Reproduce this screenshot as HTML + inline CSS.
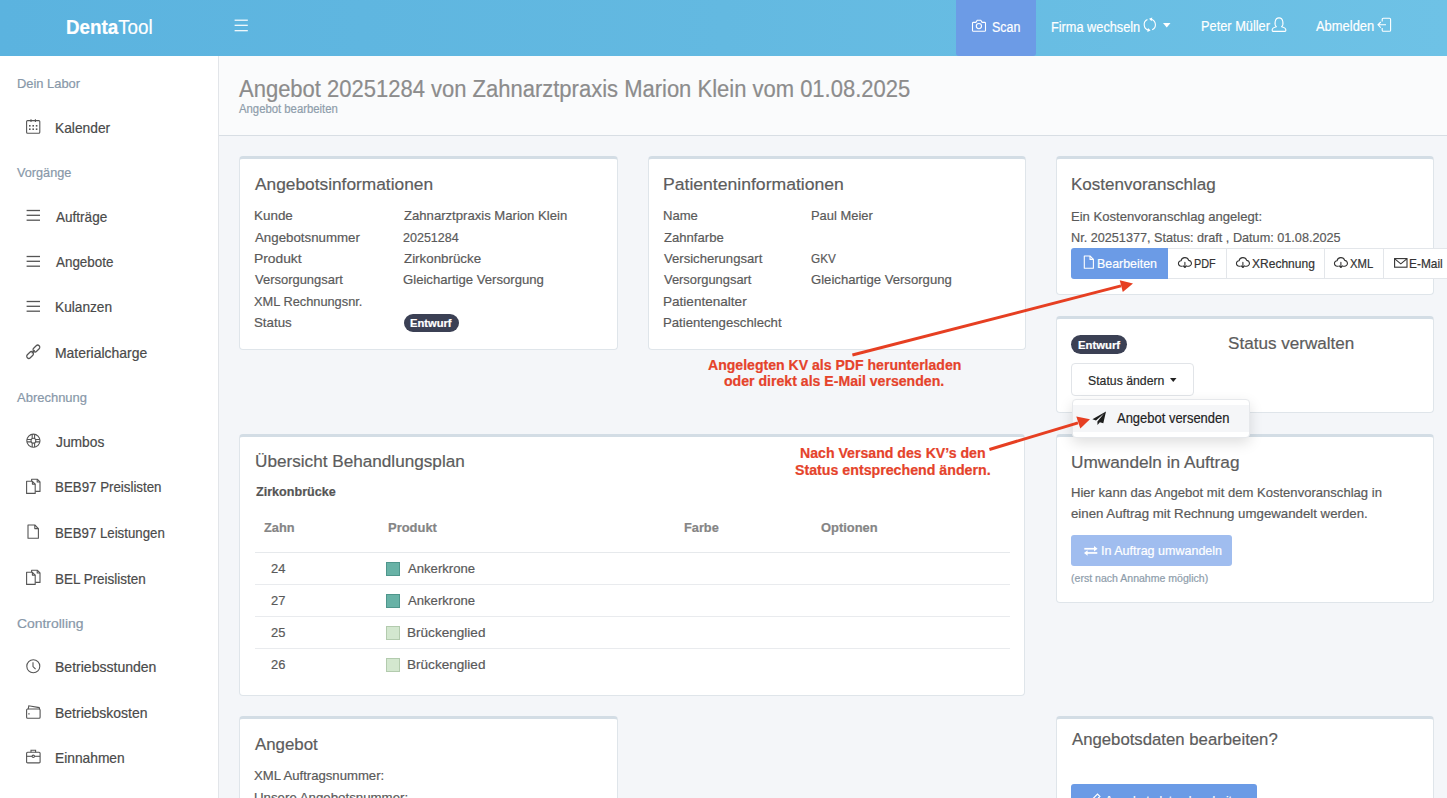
<!DOCTYPE html>
<html><head><meta charset="utf-8">
<style>
html,body{margin:0;padding:0}
body{width:1447px;height:798px;overflow:hidden;position:relative;background:#f4f6f9;font-family:"Liberation Sans",sans-serif}
.a{position:absolute;box-sizing:border-box}
.t{position:absolute;white-space:nowrap;line-height:1;transform-origin:0 0;font-family:"Liberation Sans",sans-serif}
.t b{font-weight:700}
.t{-webkit-text-stroke:0.2px currentColor}
.card{position:absolute;box-sizing:border-box;background:#fff;border:1px solid #dfe5ea;border-top:3px solid #d3dde5;border-radius:4px}
svg{position:absolute;overflow:visible}
</style></head><body>
<!-- header -->
<div class="a" style="left:0;top:0;width:1447px;height:56px;background:linear-gradient(90deg,#5bb3df 0%,#63b9e1 50%,#6ec2e6 100%)"></div>
<div class="a" style="left:956px;top:0;width:80px;height:56px;background:#6c9be6;border-radius:0 0 3px 3px"></div>
<!-- sidebar -->
<div class="a" style="left:0;top:56px;width:219px;height:742px;background:#fff;border-right:1px solid #e2e5e9"></div>
<!-- page header -->
<div class="a" style="left:219px;top:56px;width:1228px;height:80px;background:#fafbfc;border-bottom:1px solid #d8dee4"></div>

<!-- cards -->
<div class="card" style="left:239px;top:156px;width:379px;height:194px"></div>
<div class="card" style="left:648px;top:156px;width:378px;height:194px"></div>
<div class="card" style="left:1056px;top:156px;width:378px;height:139px"></div>
<div class="card" style="left:1056px;top:316px;width:378px;height:97px"></div>
<div class="card" style="left:239px;top:434px;width:786px;height:262px"></div>
<div class="card" style="left:1056px;top:434px;width:378px;height:169px"></div>
<div class="card" style="left:239px;top:716px;width:379px;height:120px"></div>
<div class="card" style="left:1056px;top:716px;width:378px;height:120px"></div>

<!-- card1 badge -->
<div class="a" style="left:404px;top:314px;width:55px;height:18px;background:#3b4054;border-radius:9px"></div>
<!-- card3 button group -->
<div class="a" style="left:1167px;top:248px;width:290px;height:31px;background:#fff;border:1px solid #e3e6ea;border-right:none"></div>
<div class="a" style="left:1226px;top:248px;width:1px;height:31px;background:#e3e6ea"></div>
<div class="a" style="left:1324px;top:248px;width:1px;height:31px;background:#e3e6ea"></div>
<div class="a" style="left:1383px;top:248px;width:1px;height:31px;background:#e3e6ea"></div>
<div class="a" style="left:1071px;top:248px;width:97px;height:31px;background:#6b9be6;border-radius:3px 0 0 3px"></div>
<!-- card4 -->
<div class="a" style="left:1071px;top:335px;width:56px;height:19px;background:#3b4054;border-radius:9.5px"></div>
<div class="a" style="left:1071px;top:363px;width:123px;height:33px;background:#fff;border:1px solid #e1e4e8;border-radius:4px"></div>
<!-- dropdown -->
<div class="a" style="left:1072px;top:399px;width:178px;height:39px;background:#fff;border:1px solid #e6e8eb;border-radius:4px;box-shadow:0 5px 14px rgba(0,0,0,.13)"></div>
<div class="a" style="left:1073px;top:405px;width:176px;height:27px;background:#f5f6f8"></div>
<!-- card5 table lines -->
<div class="a" style="left:255px;top:552px;width:755px;height:1px;background:#e6e9ec"></div>
<div class="a" style="left:255px;top:584px;width:755px;height:1px;background:#e9ebee"></div>
<div class="a" style="left:255px;top:616px;width:755px;height:1px;background:#e9ebee"></div>
<div class="a" style="left:255px;top:648px;width:755px;height:1px;background:#e9ebee"></div>
<!-- swatches -->
<div class="a" style="left:386px;top:562px;width:14px;height:14px;background:#68b2a6;border:1px solid #4f968c"></div>
<div class="a" style="left:386px;top:594px;width:14px;height:14px;background:#68b2a6;border:1px solid #4f968c"></div>
<div class="a" style="left:386px;top:626px;width:14px;height:14px;background:#d3e7cf;border:1px solid #b3cbae"></div>
<div class="a" style="left:386px;top:658px;width:14px;height:14px;background:#d3e7cf;border:1px solid #b3cbae"></div>
<!-- card6 button -->
<div class="a" style="left:1071px;top:535px;width:161px;height:31px;background:#a0bdef;border-radius:3px"></div>
<!-- card8 button -->
<div class="a" style="left:1071px;top:784px;width:186px;height:40px;background:#6b9be6;border-radius:3px"></div>

<!-- ICONS -->
<!-- header hamburger -->
<svg style="left:234px;top:18px" width="15" height="15" viewBox="0 0 15 15"><g stroke="#fff" stroke-width="1.2"><line x1="0.6" y1="2.2" x2="13.8" y2="2.2"/><line x1="0.6" y1="7.3" x2="13.8" y2="7.3"/><line x1="0.6" y1="12.7" x2="13.8" y2="12.7"/></g></svg>
<!-- camera -->
<svg style="left:972px;top:19px" width="15" height="14" viewBox="0 0 15 14"><g fill="none" stroke="#fff" stroke-width="1.1" stroke-linejoin="round"><path d="M1.4 3.4h2.5l1.3-2.2h3.6l1.3 2.2h2.5q.9 0 .9.9v7.1q0 .9-.9.9H1.4q-.9 0-.9-.9V4.3q0-.9.9-.9z"/><circle cx="6.9" cy="7.1" r="2.6"/></g></svg>
<!-- refresh -->
<svg style="left:1142px;top:17px" width="16" height="16" viewBox="0 0 16 16"><path d="M5.43 2.62A5.6 5.6 0 0 0 6.83 13.21 M10.17 12.78A5.6 5.6 0 0 0 8.77 2.19" fill="none" stroke="#fff" stroke-width="1.1"/><path d="M8.60 13.53L5.30 14.98L5.99 11.04Z M7.00 1.87L10.30 0.42L9.61 4.36Z" fill="#fff"/></svg>
<!-- caret -->
<svg style="left:1163px;top:23px" width="8" height="5" viewBox="0 0 8 5"><path d="M0 0h7.5L3.75 4.5z" fill="#fff"/></svg>
<!-- user -->
<svg style="left:1271px;top:17px" width="16" height="16" viewBox="0 0 16 16"><path d="M5.4 9.7C3.3 8.2 3.3 0.9 8 0.9S12.7 8.2 10.6 9.7C13.6 10.4 14.8 11.3 14.8 12.7V13.6Q14.8 14.4 14 14.4H2Q1.2 14.4 1.2 13.6V12.7C1.2 11.3 2.4 10.4 5.4 9.7Z" fill="none" stroke="#fff" stroke-width="1.1" stroke-linejoin="round"/></svg>
<!-- logout -->
<svg style="left:1377px;top:17px" width="15" height="15" viewBox="0 0 15 15"><g fill="none" stroke="#fff" stroke-width="1.1"><path d="M5.2 4.6V2.4Q5.2 1.3 6.3 1.3H12.5Q13.6 1.3 13.6 2.4V13.2Q13.6 14.3 12.5 14.3H6.3Q5.2 14.3 5.2 13.2V11"/><path d="M9 7.8H1M3.8 5 1 7.8l2.8 2.8"/></g></svg>

<!-- sidebar icons -->
<svg style="left:26px;top:119px" width="15" height="15" viewBox="0 0 15 15"><g fill="none" stroke="#555" stroke-width="1.1"><rect x="0.6" y="1.6" width="13.2" height="12.6" rx="1"/><line x1="5" y1="0.3" x2="5" y2="3"/><line x1="9.4" y1="0.3" x2="9.4" y2="3"/></g><g fill="#555"><rect x="3" y="6" width="1.6" height="1.6"/><rect x="6.4" y="6" width="1.6" height="1.6"/><rect x="9.8" y="6" width="1.6" height="1.6"/><rect x="3" y="9.4" width="1.6" height="1.6"/><rect x="6.4" y="9.4" width="1.6" height="1.6"/><rect x="9.8" y="9.4" width="1.6" height="1.6"/></g></svg>
<svg style="left:26px;top:209px" width="15" height="12" viewBox="0 0 15 12"><g stroke="#555" stroke-width="1.3"><line x1="0.6" y1="1.5" x2="14" y2="1.5"/><line x1="0.6" y1="6.3" x2="14" y2="6.3"/><line x1="0.6" y1="11.2" x2="14" y2="11.2"/></g></svg>
<svg style="left:26px;top:254.5px" width="15" height="12" viewBox="0 0 15 12"><g stroke="#555" stroke-width="1.3"><line x1="0.6" y1="1.5" x2="14" y2="1.5"/><line x1="0.6" y1="6.3" x2="14" y2="6.3"/><line x1="0.6" y1="11.2" x2="14" y2="11.2"/></g></svg>
<svg style="left:26px;top:300px" width="15" height="12" viewBox="0 0 15 12"><g stroke="#555" stroke-width="1.3"><line x1="0.6" y1="1.5" x2="14" y2="1.5"/><line x1="0.6" y1="6.3" x2="14" y2="6.3"/><line x1="0.6" y1="11.2" x2="14" y2="11.2"/></g></svg>
<!-- link -->
<svg style="left:22px;top:338px" width="24" height="24" viewBox="0 0 24 24"><g fill="none" stroke="#555" stroke-width="1.2"><rect x="-2.1" y="-3.9" width="4.2" height="7.8" rx="2.1" transform="translate(14.4 10.5) rotate(45)"/><rect x="-2.1" y="-3.9" width="4.2" height="7.8" rx="2.1" transform="translate(8.1 17) rotate(45)"/><line x1="9.8" y1="15.3" x2="12.7" y2="12.2"/></g></svg>
<!-- lifebuoy -->
<svg style="left:26px;top:433px" width="16" height="16" viewBox="0 0 16 16"><g fill="none" stroke="#555" stroke-width="1.1"><circle cx="7.4" cy="7.7" r="6.6"/><circle cx="7.4" cy="7.7" r="2.4"/><path d="M6.2 1.2V5.4M8.6 1.2V5.4M6.2 10V14.2M8.6 10V14.2M0.9 6.5H5.1M0.9 8.9H5.1M9.7 6.5H13.9M9.7 8.9H13.9"/></g></svg>
<!-- docs -->
<svg style="left:26px;top:478px" width="16" height="17" viewBox="0 0 16 17"><g fill="none" stroke="#555" stroke-width="1.1" stroke-linejoin="round"><path d="M0.6 3.3H6.4L9.2 6.1V15.4H0.6Z"/><path d="M6.4 3.3V6.1H9.2"/><path d="M5.6 3.2V1.2H11.2L14 4V13.4H9.3"/><path d="M11.2 1.2V4H14"/></g></svg>
<svg style="left:27px;top:524px" width="13" height="15" viewBox="0 0 13 15"><g fill="none" stroke="#555" stroke-width="1.1" stroke-linejoin="round"><path d="M1 1h6.8l3.6 3.6v9.7H1z"/><path d="M7.8 1v3.6h3.6"/></g></svg>
<svg style="left:26px;top:569px" width="16" height="17" viewBox="0 0 16 17"><g fill="none" stroke="#555" stroke-width="1.1" stroke-linejoin="round"><path d="M0.6 3.3H6.4L9.2 6.1V15.4H0.6Z"/><path d="M6.4 3.3V6.1H9.2"/><path d="M5.6 3.2V1.2H11.2L14 4V13.4H9.3"/><path d="M11.2 1.2V4H14"/></g></svg>
<!-- clock -->
<svg style="left:26px;top:659px" width="15" height="15" viewBox="0 0 15 15"><g fill="none" stroke="#555" stroke-width="1.1"><circle cx="7.3" cy="7.3" r="6.5"/><path d="M7 3.2v4.4l2.6 2.6"/></g></svg>
<!-- wallet -->
<svg style="left:26px;top:705px" width="15" height="14" viewBox="0 0 15 14"><g fill="none" stroke="#555" stroke-width="1.1"><path d="M2.2 4.2L2.8 0.8L13.2 2.6L13.6 4.2"/><rect x="0.6" y="4" width="13.5" height="9.2" rx="1"/></g><rect x="2.3" y="8.2" width="1.3" height="1.3" fill="#555"/></svg>
<!-- briefcase -->
<svg style="left:26px;top:749px" width="15" height="15" viewBox="0 0 15 15"><g fill="none" stroke="#555" stroke-width="1.1"><rect x="0.6" y="3.3" width="13.5" height="10.6" rx="1"/><path d="M5 3.3V1.3h4.6v2"/><line x1="0.6" y1="7.3" x2="14" y2="7.3"/><circle cx="7.3" cy="7.3" r="1.2" fill="#fff"/></g></svg>

<!-- button icons -->
<svg style="left:1083px;top:255px" width="12" height="15" viewBox="0 0 12 15"><g fill="none" stroke="#fff" stroke-width="1.1" stroke-linejoin="round"><path d="M1.3 1h5.7l3.4 3.4v8.8H1.3z"/><path d="M7 1v3.4h3.4"/></g></svg>
<svg style="left:1178px;top:256px" width="14" height="13" viewBox="0 0 14 13"><g fill="none" stroke="#333" stroke-width="1.1" stroke-linejoin="round" stroke-linecap="round"><path d="M4.2 10.2H3.3A2.7 2.7 0 0 1 3 4.8A4 4 0 0 1 10.7 4.4A2.9 2.9 0 0 1 10.4 10.2H9.5"/><path d="M6.9 6.4V11.4M5.2 9.8L6.9 11.5L8.6 9.8"/></g></svg>
<svg style="left:1236px;top:256px" width="14" height="13" viewBox="0 0 14 13"><g fill="none" stroke="#333" stroke-width="1.1" stroke-linejoin="round" stroke-linecap="round"><path d="M4.2 10.2H3.3A2.7 2.7 0 0 1 3 4.8A4 4 0 0 1 10.7 4.4A2.9 2.9 0 0 1 10.4 10.2H9.5"/><path d="M6.9 6.4V11.4M5.2 9.8L6.9 11.5L8.6 9.8"/></g></svg>
<svg style="left:1334px;top:256px" width="14" height="13" viewBox="0 0 14 13"><g fill="none" stroke="#333" stroke-width="1.1" stroke-linejoin="round" stroke-linecap="round"><path d="M4.2 10.2H3.3A2.7 2.7 0 0 1 3 4.8A4 4 0 0 1 10.7 4.4A2.9 2.9 0 0 1 10.4 10.2H9.5"/><path d="M6.9 6.4V11.4M5.2 9.8L6.9 11.5L8.6 9.8"/></g></svg>
<svg style="left:1394px;top:258px" width="14" height="10" viewBox="0 0 14 10"><g fill="none" stroke="#333" stroke-width="1.1"><rect x="0.6" y="0.6" width="12.4" height="8.6"/><path d="M0.8 0.8l6 5 6-5"/></g></svg>
<!-- status caret -->
<svg style="left:1170px;top:378px" width="7" height="5" viewBox="0 0 7 5"><path d="M0 0h6.5L3.25 4z" fill="#222"/></svg>
<!-- paper plane -->
<svg style="left:1091px;top:410px" width="17" height="16" viewBox="0 0 17 16"><path d="M15 1.5L1.4 9.3l3.6 1.1L13 3.4 6.4 11.4l.1 3.5 2.4-2.6 3.4 1z" fill="#1e1e1e"/></svg>
<!-- exchange icon -->
<svg style="left:1084px;top:546px" width="14" height="10" viewBox="0 0 14 10"><g fill="#fff"><rect x="0.3" y="1.9" width="10.5" height="1.7"/><path d="M10 0L13.6 2.75L10 5.5z"/><rect x="2.8" y="6.1" width="10.5" height="1.7"/><path d="M3.6 4.2L0 6.95L3.6 9.7z"/></g></svg>

<!-- pencil -->
<svg style="left:1089px;top:793px" width="12" height="12" viewBox="0 0 12 12"><path d="M1 11l.6-3L8.5 1.1l2.4 2.4L4 10.4z" fill="none" stroke="#fff" stroke-width="1.2"/></svg>
<!-- TEXTS -->
<div class='t' style='left:66.2px;top:18px;font-size:19.8px;font-weight:400;color:#fff;transform:scaleX(0.949)'><b>Denta</b>Tool</div>
<div class='t' style='left:991.8px;top:20px;font-size:14.0px;font-weight:400;color:#fff;transform:scaleX(0.887)'>Scan</div>
<div class='t' style='left:1050.7px;top:20px;font-size:14.0px;font-weight:400;color:#fff;transform:scaleX(0.910)'>Firma wechseln</div>
<div class='t' style='left:1200.7px;top:19px;font-size:14.0px;font-weight:400;color:#fff;transform:scaleX(0.914)'>Peter Müller</div>
<div class='t' style='left:1316.0px;top:19px;font-size:14.0px;font-weight:400;color:#fff;transform:scaleX(0.923)'>Abmelden</div>
<div class='t' style='left:239.3px;top:78px;font-size:23.3px;font-weight:400;color:#8c8c8c;transform:scaleX(0.944)'>Angebot 20251284 von Zahnarztpraxis Marion Klein vom 01.08.2025</div>
<div class='t' style='left:239.3px;top:103px;font-size:12.0px;font-weight:400;color:#8e9dab;transform:scaleX(0.943)'>Angebot bearbeiten</div>
<div class='t' style='left:16.7px;top:77px;font-size:13.0px;font-weight:400;color:#8898a9;transform:scaleX(0.992)'>Dein Labor</div>
<div class='t' style='left:17.2px;top:166px;font-size:13.0px;font-weight:400;color:#8898a9;transform:scaleX(0.976)'>Vorgänge</div>
<div class='t' style='left:17.2px;top:391px;font-size:13.0px;font-weight:400;color:#8898a9;transform:scaleX(0.999)'>Abrechnung</div>
<div class='t' style='left:16.6px;top:617px;font-size:13.0px;font-weight:400;color:#8898a9;transform:scaleX(1.069)'>Controlling</div>
<div class='t' style='left:54.6px;top:121px;font-size:14.2px;font-weight:400;color:#4a4a4a;transform:scaleX(0.971)'>Kalender</div>
<div class='t' style='left:55.6px;top:210px;font-size:14.2px;font-weight:400;color:#4a4a4a;transform:scaleX(0.955)'>Aufträge</div>
<div class='t' style='left:55.6px;top:255px;font-size:14.2px;font-weight:400;color:#4a4a4a;transform:scaleX(0.945)'>Angebote</div>
<div class='t' style='left:54.6px;top:300px;font-size:14.2px;font-weight:400;color:#4a4a4a;transform:scaleX(0.965)'>Kulanzen</div>
<div class='t' style='left:54.6px;top:346px;font-size:14.2px;font-weight:400;color:#4a4a4a;transform:scaleX(0.982)'>Materialcharge</div>
<div class='t' style='left:55.6px;top:435px;font-size:14.2px;font-weight:400;color:#4a4a4a;transform:scaleX(0.973)'>Jumbos</div>
<div class='t' style='left:54.7px;top:480px;font-size:14.2px;font-weight:400;color:#4a4a4a;transform:scaleX(0.938)'>BEB97 Preislisten</div>
<div class='t' style='left:54.7px;top:526px;font-size:14.2px;font-weight:400;color:#4a4a4a;transform:scaleX(0.934)'>BEB97 Leistungen</div>
<div class='t' style='left:54.7px;top:572px;font-size:14.2px;font-weight:400;color:#4a4a4a;transform:scaleX(0.948)'>BEL Preislisten</div>
<div class='t' style='left:54.6px;top:660px;font-size:14.2px;font-weight:400;color:#4a4a4a;transform:scaleX(0.989)'>Betriebsstunden</div>
<div class='t' style='left:54.6px;top:706px;font-size:14.2px;font-weight:400;color:#4a4a4a;transform:scaleX(0.986)'>Betriebskosten</div>
<div class='t' style='left:54.6px;top:751px;font-size:14.2px;font-weight:400;color:#4a4a4a;transform:scaleX(0.971)'>Einnahmen</div>
<div class='t' style='left:255.4px;top:176px;font-size:17.2px;font-weight:400;color:#5c5c5c;transform:scaleX(1.007)'>Angebotsinformationen</div>
<div class='t' style='left:662.9px;top:176px;font-size:17.2px;font-weight:400;color:#5c5c5c;transform:scaleX(1.023)'>Patienteninformationen</div>
<div class='t' style='left:1071.0px;top:176px;font-size:17.2px;font-weight:400;color:#5c5c5c;transform:scaleX(0.990)'>Kostenvoranschlag</div>
<div class='t' style='left:1227.8px;top:335px;font-size:17.2px;font-weight:400;color:#5c5c5c;transform:scaleX(0.994)'>Status verwalten</div>
<div class='t' style='left:254.8px;top:453px;font-size:17.2px;font-weight:400;color:#5c5c5c;transform:scaleX(0.998)'>Übersicht Behandlungsplan</div>
<div class='t' style='left:1071.2px;top:454px;font-size:17.2px;font-weight:400;color:#5c5c5c;transform:scaleX(1.002)'>Umwandeln in Auftrag</div>
<div class='t' style='left:255.2px;top:736px;font-size:17.2px;font-weight:400;color:#5c5c5c;transform:scaleX(0.980)'>Angebot</div>
<div class='t' style='left:1071.8px;top:731px;font-size:17.2px;font-weight:400;color:#5c5c5c;transform:scaleX(0.974)'>Angebotsdaten bearbeiten?</div>
<div class='t' style='left:254.2px;top:209px;font-size:13.5px;font-weight:400;color:#5a5a5a;transform:scaleX(0.995)'>Kunde</div>
<div class='t' style='left:255.2px;top:231px;font-size:13.5px;font-weight:400;color:#5a5a5a;transform:scaleX(0.984)'>Angebotsnummer</div>
<div class='t' style='left:254.2px;top:252px;font-size:13.5px;font-weight:400;color:#5a5a5a;transform:scaleX(1.022)'>Produkt</div>
<div class='t' style='left:255.2px;top:273px;font-size:13.5px;font-weight:400;color:#5a5a5a;transform:scaleX(0.960)'>Versorgungsart</div>
<div class='t' style='left:254.3px;top:295px;font-size:13.5px;font-weight:400;color:#5a5a5a;transform:scaleX(0.948)'>XML Rechnungsnr.</div>
<div class='t' style='left:254.2px;top:316px;font-size:13.5px;font-weight:400;color:#5a5a5a;transform:scaleX(0.984)'>Status</div>
<div class='t' style='left:403.9px;top:209px;font-size:13.5px;font-weight:400;color:#5a5a5a;transform:scaleX(0.971)'>Zahnarztpraxis Marion Klein</div>
<div class='t' style='left:403.0px;top:231px;font-size:13.5px;font-weight:400;color:#5a5a5a;transform:scaleX(0.927)'>20251284</div>
<div class='t' style='left:403.9px;top:252px;font-size:13.5px;font-weight:400;color:#5a5a5a;transform:scaleX(0.988)'>Zirkonbrücke</div>
<div class='t' style='left:402.9px;top:273px;font-size:13.5px;font-weight:400;color:#5a5a5a;transform:scaleX(0.973)'>Gleichartige Versorgung</div>
<div class='t' style='left:662.9px;top:209px;font-size:13.5px;font-weight:400;color:#5a5a5a;transform:scaleX(0.969)'>Name</div>
<div class='t' style='left:663.9px;top:231px;font-size:13.5px;font-weight:400;color:#5a5a5a;transform:scaleX(0.970)'>Zahnfarbe</div>
<div class='t' style='left:663.9px;top:252px;font-size:13.5px;font-weight:400;color:#5a5a5a;transform:scaleX(0.970)'>Versicherungsart</div>
<div class='t' style='left:663.9px;top:273px;font-size:13.5px;font-weight:400;color:#5a5a5a;transform:scaleX(0.955)'>Versorgungsart</div>
<div class='t' style='left:662.9px;top:295px;font-size:13.5px;font-weight:400;color:#5a5a5a;transform:scaleX(1.004)'>Patientenalter</div>
<div class='t' style='left:662.9px;top:316px;font-size:13.5px;font-weight:400;color:#5a5a5a;transform:scaleX(0.975)'>Patientengeschlecht</div>
<div class='t' style='left:811.0px;top:209px;font-size:13.5px;font-weight:400;color:#5a5a5a;transform:scaleX(0.957)'>Paul Meier</div>
<div class='t' style='left:811.1px;top:252px;font-size:13.5px;font-weight:400;color:#5a5a5a;transform:scaleX(0.870)'>GKV</div>
<div class='t' style='left:811.0px;top:273px;font-size:13.5px;font-weight:400;color:#5a5a5a;transform:scaleX(0.972)'>Gleichartige Versorgung</div>
<div class='t' style='left:410.0px;top:318px;font-size:11.0px;font-weight:700;color:#fff;transform:scaleX(1.015)'>Entwurf</div>
<div class='t' style='left:1071.0px;top:210px;font-size:13.5px;font-weight:400;color:#5a5a5a;transform:scaleX(0.968)'>Ein Kostenvoranschlag angelegt:</div>
<div class='t' style='left:1071.1px;top:231px;font-size:13.5px;font-weight:400;color:#5a5a5a;transform:scaleX(0.938)'>Nr. 20251377, Status: draft , Datum: 01.08.2025</div>
<div class='t' style='left:1097.4px;top:258px;font-size:12.9px;font-weight:400;color:#fff;transform:scaleX(0.961)'>Bearbeiten</div>
<div class='t' style='left:1193.6px;top:258px;font-size:12.9px;font-weight:400;color:#333;transform:scaleX(0.844)'>PDF</div>
<div class='t' style='left:1251.5px;top:258px;font-size:12.9px;font-weight:400;color:#333;transform:scaleX(0.933)'>XRechnung</div>
<div class='t' style='left:1349.9px;top:258px;font-size:12.9px;font-weight:400;color:#333;transform:scaleX(0.876)'>XML</div>
<div class='t' style='left:1409.1px;top:258px;font-size:12.9px;font-weight:400;color:#333;transform:scaleX(0.923)'>E-Mail</div>
<div class='t' style='left:1077.9px;top:340px;font-size:11.0px;font-weight:700;color:#fff;transform:scaleX(1.027)'>Entwurf</div>
<div class='t' style='left:1088.1px;top:374px;font-size:13.2px;font-weight:400;color:#2a2a2a;transform:scaleX(0.930)'>Status ändern</div>
<div class='t' style='left:1117.2px;top:411px;font-size:14.0px;font-weight:400;color:#222;transform:scaleX(0.926)'>Angebot versenden</div>
<div class='t' style='left:707.6px;top:359px;font-size:13.8px;font-weight:700;color:#e5432b;transform:scaleX(1.020)'>Angelegten KV als PDF herunterladen</div>
<div class='t' style='left:723.7px;top:375px;font-size:13.8px;font-weight:700;color:#e5432b;transform:scaleX(1.022)'>oder direkt als E-Mail versenden.</div>
<div class='t' style='left:799.5px;top:447px;font-size:13.8px;font-weight:700;color:#e5432b;transform:scaleX(1.024)'>Nach Versand des KV’s den</div>
<div class='t' style='left:795.0px;top:464px;font-size:13.8px;font-weight:700;color:#e5432b;transform:scaleX(1.029)'>Status entsprechend ändern.</div>
<div class='t' style='left:255.8px;top:485px;font-size:13.0px;font-weight:700;color:#555;transform:scaleX(0.968)'>Zirkonbrücke</div>
<div class='t' style='left:263.5px;top:521px;font-size:13.0px;font-weight:700;color:#858585;transform:scaleX(0.983)'>Zahn</div>
<div class='t' style='left:388.4px;top:521px;font-size:13.0px;font-weight:700;color:#858585;transform:scaleX(0.996)'>Produkt</div>
<div class='t' style='left:684.3px;top:521px;font-size:13.0px;font-weight:700;color:#858585;transform:scaleX(0.982)'>Farbe</div>
<div class='t' style='left:821.1px;top:521px;font-size:13.0px;font-weight:700;color:#858585;transform:scaleX(0.993)'>Optionen</div>
<div class='t' style='left:270.6px;top:562px;font-size:13.5px;font-weight:400;color:#5a5a5a;transform:scaleX(0.957)'>24</div>
<div class='t' style='left:408.0px;top:562px;font-size:13.5px;font-weight:400;color:#5a5a5a;transform:scaleX(0.971)'>Ankerkrone</div>
<div class='t' style='left:270.6px;top:594px;font-size:13.5px;font-weight:400;color:#5a5a5a;transform:scaleX(0.957)'>27</div>
<div class='t' style='left:408.0px;top:594px;font-size:13.5px;font-weight:400;color:#5a5a5a;transform:scaleX(0.971)'>Ankerkrone</div>
<div class='t' style='left:270.6px;top:626px;font-size:13.5px;font-weight:400;color:#5a5a5a;transform:scaleX(0.957)'>25</div>
<div class='t' style='left:407.0px;top:626px;font-size:13.5px;font-weight:400;color:#5a5a5a;transform:scaleX(1.005)'>Brückenglied</div>
<div class='t' style='left:270.6px;top:658px;font-size:13.5px;font-weight:400;color:#5a5a5a;transform:scaleX(0.957)'>26</div>
<div class='t' style='left:407.0px;top:658px;font-size:13.5px;font-weight:400;color:#5a5a5a;transform:scaleX(1.005)'>Brückenglied</div>
<div class='t' style='left:1071.2px;top:486px;font-size:13.5px;font-weight:400;color:#5a5a5a;transform:scaleX(0.968)'>Hier kann das Angebot mit dem Kostenvoranschlag in</div>
<div class='t' style='left:1071.2px;top:507px;font-size:13.5px;font-weight:400;color:#5a5a5a;transform:scaleX(0.981)'>einen Auftrag mit Rechnung umgewandelt werden.</div>
<div class='t' style='left:1101.3px;top:545px;font-size:12.2px;font-weight:400;color:#fff;transform:scaleX(1.027)'>In Auftrag umwandeln</div>
<div class='t' style='left:1071.0px;top:574px;font-size:10.4px;font-weight:400;color:#8e9dab;transform:scaleX(1.015)'>(erst nach Annahme möglich)</div>
<div class='t' style='left:254.2px;top:769px;font-size:13.5px;font-weight:400;color:#5a5a5a;transform:scaleX(0.973)'>XML Auftragsnummer:</div>
<div class='t' style='left:254.2px;top:791px;font-size:13.5px;font-weight:400;color:#5a5a5a;transform:scaleX(0.983)'>Unsere Angebotsnummer:</div>
<div class='t' style='left:1104.5px;top:794px;font-size:13.2px;font-weight:400;color:#fff;transform:scaleX(0.906)'>Angebotsdaten bearbeiten</div>

<!-- annotation arrows -->
<svg style="left:0;top:0" width="1447" height="798" viewBox="0 0 1447 798">
<g stroke="#e63f22" stroke-width="2.9" stroke-linecap="butt"><line x1="852.4" y1="355" x2="1121" y2="285.9"/><line x1="989.4" y1="449.5" x2="1078" y2="422.8"/></g>
<g fill="#e63f22"><path d="M1133 283.4L1119.7 280.2 1122.8 291.9z"/><path d="M1090 419.3L1076.3 416.6 1080.3 428.6z"/></g>
</svg>
</body></html>
